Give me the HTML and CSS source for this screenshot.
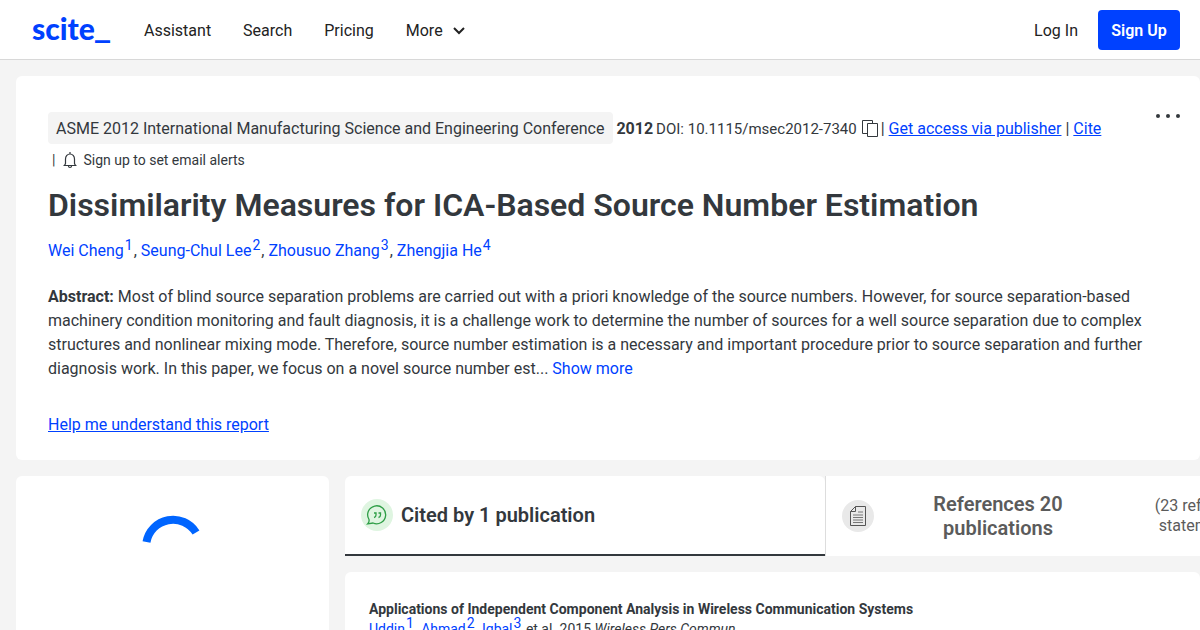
FILE: index.html
```html
<!DOCTYPE html>
<html lang="en">
<head>
  <meta charset="UTF-8">
  <meta name="viewport" content="width=device-width, initial-scale=1.0">
  <title>Dissimilarity Measures for ICA-Based Source Number Estimation</title>
  <link rel="stylesheet" href="styles.css">
</head>
<body>
  <header class="navbar">
    <a class="logo" href="#">scite<span class="cursor">_</span></a>
    <nav class="nav-links">
      <a href="#">Assistant</a>
      <a href="#">Search</a>
      <a href="#">Pricing</a>
      <button class="nav-more" type="button">More
        <svg width="12" height="8" viewBox="0 0 12 8"><path d="M1 1l5 5 5-5" fill="none" stroke="currentColor" stroke-width="2"/></svg>
      </button>
    </nav>
    <div class="account">
      <a href="#">Log In</a>
      <button class="sign-up" type="button">Sign Up</button>
    </div>
  </header>

  <main>
    <section class="card paper">
      <button class="menu-btn" type="button" aria-label="More options">
        <svg width="24" height="4" viewBox="0 0 24 4" fill="currentColor"><circle cx="2" cy="2" r="2"/><circle cx="12" cy="2" r="2"/><circle cx="22" cy="2" r="2"/></svg>
      </button>
      <div class="meta">
        <span class="journal">ASME 2012 International Manufacturing Science and Engineering Conference</span>
        <strong>2012</strong>
        <span class="doi">DOI: 10.1115/msec2012-7340</span>
        <button class="copy-btn" type="button" aria-label="Copy DOI">
          <svg width="16" height="17" viewBox="0 0 16 17" fill="none" stroke="currentColor"><path d="M5 13.500H.5v-13h10v3M5.500 3.500h10v13h-10z"/></svg>
        </button>
        <span>| <a href="#">Get access via publisher</a> | <a href="#">Cite</a></span>
      </div>
      <div class="alerts">
        <span>|</span>
        <button class="alert-btn" type="button">
          <svg width="14" height="17" viewBox="0 0 14 17" fill="none" stroke="currentColor" stroke-width="1.200"><path d="M7 0v2M.5 13.500h13M1.500 13.500l1-2V7a4.500 5 0 0 1 9 0v4.500l1 2M5.500 14a1.500 1.500 0 0 0 3 0"/></svg>
          Sign up to set email alerts
        </button>
      </div>
      <h1>Dissimilarity Measures for ICA-Based Source Number Estimation</h1>
      <p class="authors"><a href="#">Wei Cheng<sup>1</sup></a>, <a href="#">Seung-Chul Lee<sup>2</sup></a>, <a href="#">Zhousuo Zhang<sup>3</sup></a>, <a href="#">Zhengjia He<sup>4</sup></a></p>
      <p class="abstract"><strong>Abstract:</strong> Most of blind source separation problems are carried out with a priori knowledge of the source numbers. However, for source separation-based machinery condition monitoring and fault diagnosis, it is a challenge work to determine the number of sources for a well source separation due to complex structures and nonlinear mixing mode. Therefore, source number estimation is a necessary and important procedure prior to source separation and further diagnosis work. In this paper, we focus on a novel source number est... <a href="#">Show more</a></p>
      <a class="help" href="#">Help me understand this report</a>
    </section>

    <div class="columns">
      <aside class="card loading">
        <svg width="72" height="72" viewBox="0 0 72 72"><path d="M9.500 32A27 27 0 0 1 59 22.500" fill="none" stroke="#0065ff" stroke-width="8"/></svg>
      </aside>
      <div class="content">
        <div class="tabs">
          <button class="tab active" type="button">
            <svg class="tab-icon" width="32" height="32" viewBox="0 0 32 32">
              <circle cx="16" cy="16" r="16" fill="#dff5e1"/>
              <path d="M8 20.500A9 9 0 1 1 12 24L6.800 24.800Q8.500 23 8 20.500z" fill="none" stroke="#2e9e46" stroke-width="1.300"/>
              <path d="M13 14h2v2q0 2-2 2.500M17.500 14h2v2q0 2-2 2.500" fill="none" stroke="#2e9e46" stroke-width="1.300"/>
            </svg>
            <span class="tab-title">Cited by 1 publication</span>
          </button>
          <button class="tab references" type="button">
            <svg class="tab-icon" width="32" height="32" viewBox="0 0 32 32">
              <circle cx="16" cy="16" r="16" fill="#e9e9e9"/>
              <path d="M13.500 6.500h10v19h-15v-14zM13.500 6.500v5h-5" fill="none" stroke="#555"/>
              <path d="M16 12h5M11 15h10M11 17.500h10M11 20h10M11 22.500h10" stroke="#777"/>
            </svg>
            <span class="tab-title">References 20 publications</span>
            <span class="tab-note">(23 reference statements)</span>
          </button>
        </div>
        <article class="card citation">
          <h2>Applications of Independent Component Analysis in Wireless Communication Systems</h2>
          <p><a href="#">Uddin<sup>1</sup></a>, <a href="#">Ahmad<sup>2</sup></a>, <a href="#">Iqbal<sup>3</sup></a> et al. 2015 <em>Wireless Pers Commun</em></p>
        </article>
      </div>
    </div>
  </main>
</body>
</html>
```
FILE: styles.css
```css
* {
  box-sizing: border-box;
}
body {
  margin: 0;
  background: #f4f4f4;
  color: #33383d;
  font-family: Roboto, "Liberation Sans", sans-serif;
  font-size: 16px;
  line-height: 24px;
  overflow: hidden;
}
a {
  color: #0041ff;
}
button {
  padding: 0;
  border: none;
  background: none;
  color: inherit;
  font: inherit;
  cursor: pointer;
}
h1, h2, p {
  margin: 0;
}
sup {
  padding: 0 1px;
  font-size: 14px;
  line-height: 0;
}
.navbar {
  display: flex;
  align-items: center;
  height: 60px;
  padding: 0 20px 0 32px;
  background: #fff;
  border-bottom: 1px solid #d8d8d8;
  color: #222;
}
.navbar a {
  color: inherit;
  text-decoration: none;
}
.navbar .logo {
  width: 80px;
  margin-right: 32px;
  padding-bottom: 3px;
  color: #0041ff;
  font-family: Lato, sans-serif;
  font-size: 30px;
  font-weight: 900;
  line-height: 28px;
  white-space: nowrap;
}
.cursor {
  font-family: "DejaVu Sans", sans-serif;
  font-size: 30px;
  font-weight: 700;
  line-height: 0;
  vertical-align: 4px;
}
.nav-links {
  display: flex;
  gap: 32px;
  padding-top: 2px;
}
.nav-more {
  display: flex;
  align-items: center;
  gap: 10px;
}
.account {
  display: flex;
  align-items: center;
  gap: 20px;
  margin-left: auto;
}
.account a {
  padding-top: 2px;
}
.sign-up {
  width: 82px;
  height: 40px;
  padding-top: 2px;
  background: #0041ff;
  border-radius: 4px;
  color: #fff;
  font-weight: 600;
}
main {
  padding: 16px 0 0 16px;
}
.card {
  background: #fff;
  border-radius: 6px;
}
.paper {
  position: relative;
  padding: 36px 48px 23px 32px;
}
.menu-btn {
  position: absolute;
  top: 38px;
  right: 20px;
  display: flex;
}
.meta {
  display: flex;
  align-items: center;
  gap: 3px;
  white-space: nowrap;
}
.journal {
  padding: 5px 9px 3px 8px;
  background: #f4f4f4;
  border-radius: 4px;
}
.meta strong, .meta > span:last-child, .doi {
  padding-top: 2px;
}
.doi {
  font-size: 15px;
}
.copy-btn {
  display: flex;
  margin-left: 2px;
}
.alerts {
  display: flex;
  align-items: center;
  gap: 8px;
  height: 32px;
  padding-left: 4px;
  font-size: 14px;
}
.alert-btn {
  display: flex;
  align-items: center;
  gap: 6px;
}
h1 {
  padding-top: 8px;
  font-size: 32px;
  font-weight: 600;
  line-height: 42px;
}
.authors {
  padding: 13px 0 22px;
}
.authors a, .abstract a, .citation a {
  text-decoration: none;
}
.help {
  display: inline-block;
  margin-top: 32px;
}
.columns {
  display: flex;
  gap: 16px;
  margin-top: 16px;
}
.loading {
  flex: none;
  width: 313px;
  padding-top: 34px;
  text-align: center;
}
.content {
  flex: 1;
  min-width: 0;
}
.tabs {
  display: flex;
  height: 80px;
}
.tab {
  display: flex;
  flex: none;
  align-items: center;
  width: 480px;
  padding: 0 16px;
  background: #fff;
}
.tab-icon {
  flex: none;
}
.tab-title {
  font-size: 20px;
  font-weight: 600;
}
.active {
  gap: 8px;
  border-bottom: 2px solid #33383d;
  border-radius: 6px 6px 0 0;
}
.references {
  border-left: 1px solid #ddd;
  color: #5b5b5b;
}
.references .tab-title {
  flex: none;
  width: 248px;
  padding: 0 48px;
}
.tab-note {
  flex: none;
  width: 120px;
  margin-left: 20px;
  line-height: 20px;
}
.citation {
  margin-top: 16px;
  padding: 24px 24px 40px;
  font-size: 14px;
}
.citation h2 {
  padding-top: 3px;
  font-size: 14px;
  font-weight: 700;
  line-height: 20px;
}
.citation p {
  line-height: 20px;
}
```
